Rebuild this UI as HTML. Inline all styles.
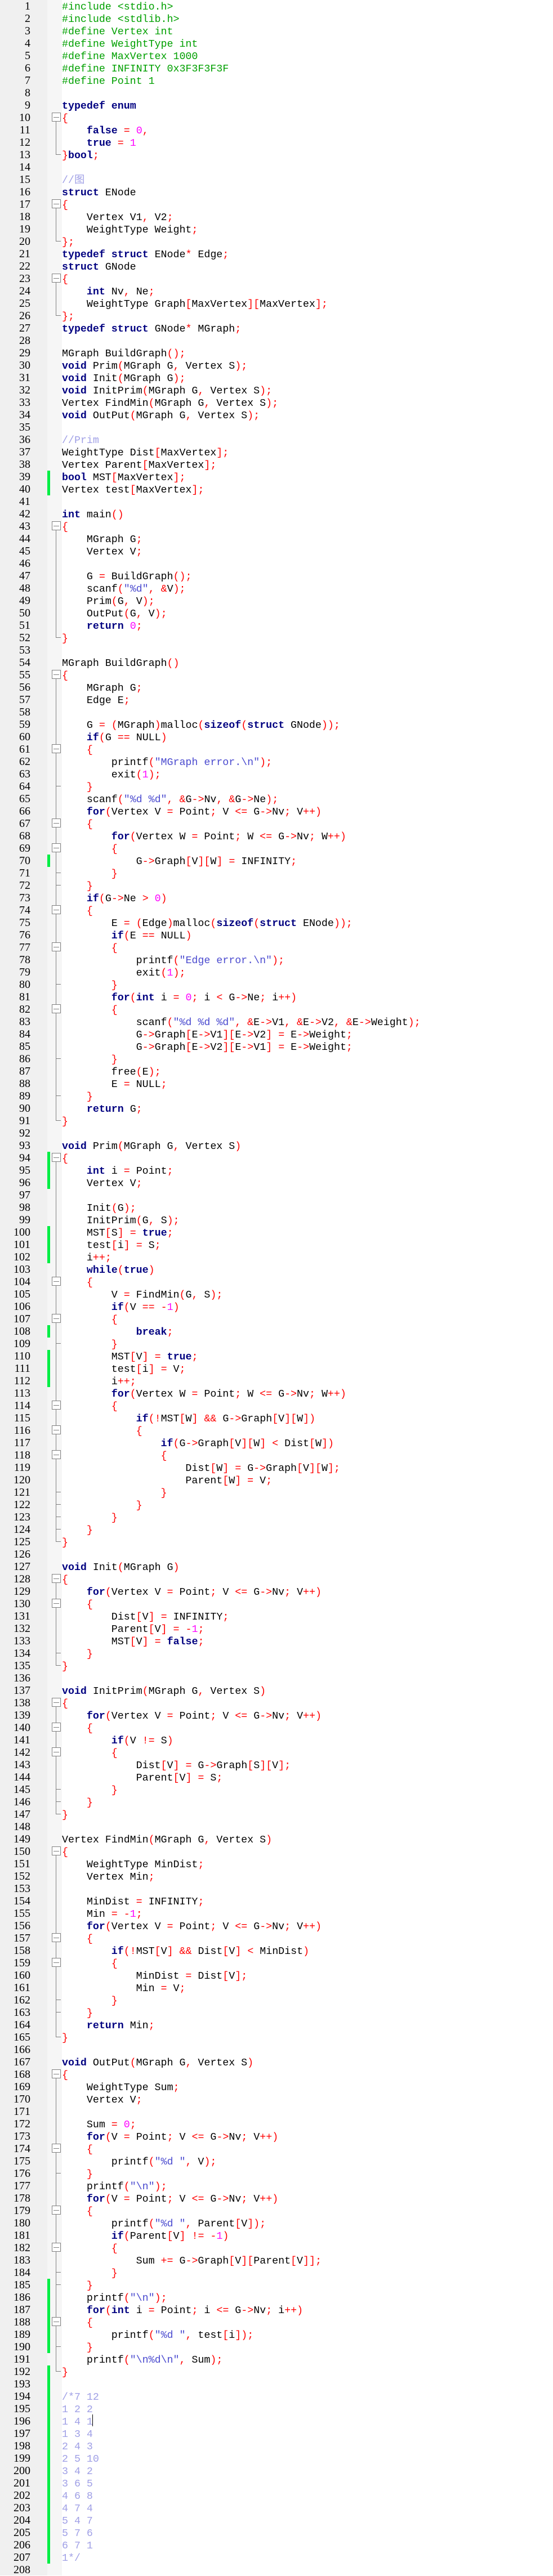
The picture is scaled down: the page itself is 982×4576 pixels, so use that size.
<!DOCTYPE html>
<html><head><meta charset="utf-8">
<style>
html,body{margin:0;padding:0;background:#fff;}
body{width:982px;height:4575px;position:relative;overflow:hidden;}
#gut{position:absolute;left:0;top:0;width:84px;height:4575px;background:#f0f0f0;}
#fold{position:absolute;left:84px;top:0;width:26px;height:4575px;background:#f6f6f6;}
.ln{position:absolute;left:0;width:54px;text-align:right;font-family:"Liberation Serif",serif;font-size:20px;line-height:22px;height:22px;color:#000;}
.code{position:absolute;left:110px;height:22px;line-height:22px;white-space:pre;font-family:"Liberation Mono","Noto Sans CJK SC",monospace;font-size:18.3px;color:#000;padding-top:2px;box-sizing:border-box;}
.g{position:absolute;left:84px;width:5px;height:22px;background:#00ee44;}
.box{position:absolute;left:92px;width:14px;height:14px;border:1px solid #808080;background:#fff;}
.box:after{content:"";position:absolute;left:2px;right:2px;top:7px;height:1px;background:#808080;}
.vl{position:absolute;left:99px;width:1px;background:#808080;}
.hl{position:absolute;left:99px;width:9px;height:1px;background:#808080;}
.k{color:#000080;font-weight:bold;}
.o{color:#ff0000;}
.n{color:#ff00ff;}
.s{color:#4a4acf;}
.p{color:#00a000;}
.c{color:#a0a0e6;}
#src{display:none;}
#cur{position:absolute;left:164px;top:4289px;width:1px;height:21px;background:#000;}
</style></head><body>
<div id="gut"></div><div id="fold"></div>
<pre id="src">#include &lt;stdio.h&gt;
#include &lt;stdlib.h&gt;
#define Vertex int
#define WeightType int
#define MaxVertex 1000
#define INFINITY 0x3F3F3F3F
#define Point 1

typedef enum
{
    false = 0,
    true = 1
}bool;

//图
struct ENode
{
    Vertex V1, V2;
    WeightType Weight;
};
typedef struct ENode* Edge;
struct GNode
{
    int Nv, Ne;
    WeightType Graph[MaxVertex][MaxVertex];
};
typedef struct GNode* MGraph;

MGraph BuildGraph();
void Prim(MGraph G, Vertex S);
void Init(MGraph G);
void InitPrim(MGraph G, Vertex S);
Vertex FindMin(MGraph G, Vertex S);
void OutPut(MGraph G, Vertex S);

//Prim
WeightType Dist[MaxVertex];
Vertex Parent[MaxVertex];
bool MST[MaxVertex];
Vertex test[MaxVertex];

int main()
{
    MGraph G;
    Vertex V;

    G = BuildGraph();
    scanf("%d", &amp;V);
    Prim(G, V);
    OutPut(G, V);
    return 0;
}

MGraph BuildGraph()
{
    MGraph G;
    Edge E;

    G = (MGraph)malloc(sizeof(struct GNode));
    if(G == NULL)
    {
        printf("MGraph error.\n");
        exit(1);
    }
    scanf("%d %d", &amp;G-&gt;Nv, &amp;G-&gt;Ne);
    for(Vertex V = Point; V &lt;= G-&gt;Nv; V++)
    {
        for(Vertex W = Point; W &lt;= G-&gt;Nv; W++)
        {
            G-&gt;Graph[V][W] = INFINITY;
        }
    }
    if(G-&gt;Ne &gt; 0)
    {
        E = (Edge)malloc(sizeof(struct ENode));
        if(E == NULL)
        {
            printf("Edge error.\n");
            exit(1);
        }
        for(int i = 0; i &lt; G-&gt;Ne; i++)
        {
            scanf("%d %d %d", &amp;E-&gt;V1, &amp;E-&gt;V2, &amp;E-&gt;Weight);
            G-&gt;Graph[E-&gt;V1][E-&gt;V2] = E-&gt;Weight;
            G-&gt;Graph[E-&gt;V2][E-&gt;V1] = E-&gt;Weight;
        }
        free(E);
        E = NULL;
    }
    return G;
}

void Prim(MGraph G, Vertex S)
{
    int i = Point;
    Vertex V;

    Init(G);
    InitPrim(G, S);
    MST[S] = true;
    test[i] = S;
    i++;
    while(true)
    {
        V = FindMin(G, S);
        if(V == -1)
        {
            break;
        }
        MST[V] = true;
        test[i] = V;
        i++;
        for(Vertex W = Point; W &lt;= G-&gt;Nv; W++)
        {
            if(!MST[W] &amp;&amp; G-&gt;Graph[V][W])
            {
                if(G-&gt;Graph[V][W] &lt; Dist[W])
                {
                    Dist[W] = G-&gt;Graph[V][W];
                    Parent[W] = V;
                }
            }
        }
    }
}

void Init(MGraph G)
{
    for(Vertex V = Point; V &lt;= G-&gt;Nv; V++)
    {
        Dist[V] = INFINITY;
        Parent[V] = -1;
        MST[V] = false;
    }
}

void InitPrim(MGraph G, Vertex S)
{
    for(Vertex V = Point; V &lt;= G-&gt;Nv; V++)
    {
        if(V != S)
        {
            Dist[V] = G-&gt;Graph[S][V];
            Parent[V] = S;
        }
    }
}

Vertex FindMin(MGraph G, Vertex S)
{
    WeightType MinDist;
    Vertex Min;

    MinDist = INFINITY;
    Min = -1;
    for(Vertex V = Point; V &lt;= G-&gt;Nv; V++)
    {
        if(!MST[V] &amp;&amp; Dist[V] &lt; MinDist)
        {
            MinDist = Dist[V];
            Min = V;
        }
    }
    return Min;
}

void OutPut(MGraph G, Vertex S)
{
    WeightType Sum;
    Vertex V;

    Sum = 0;
    for(V = Point; V &lt;= G-&gt;Nv; V++)
    {
        printf("%d ", V);
    }
    printf("\n");
    for(V = Point; V &lt;= G-&gt;Nv; V++)
    {
        printf("%d ", Parent[V]);
        if(Parent[V] != -1)
        {
            Sum += G-&gt;Graph[V][Parent[V]];
        }
    }
    printf("\n");
    for(int i = Point; i &lt;= G-&gt;Nv; i++)
    {
        printf("%d ", test[i]);
    }
    printf("\n%d\n", Sum);
}

/*7 12
1 2 2
1 4 1
1 3 4
2 4 3
2 5 10
3 4 2
3 6 5
4 6 8
4 7 4
5 4 7
5 7 6
6 7 1
1*/
</pre>
<div id="cur"></div>
<script>
(function(){
var src=document.getElementById('src');
var lines=src.textContent.split('\n');
while(lines.length<208)lines.push('');
lines=lines.slice(0,208);
src.parentNode.removeChild(src);
var KW={typedef:1,enum:1,struct:1,int:1,void:1,bool:1,true:1,false:1,return:1,if:1,for:1,while:1,break:1,sizeof:1};
var green={};
[[39,40],[70,70],[94,96],[100,102],[108,108],[110,112],[185,190],[192,207]].forEach(function(r){for(var i=r[0];i<=r[1];i++)green[i]=1;});
function esc(s){return s.replace(/&/g,'&amp;').replace(/</g,'&lt;').replace(/>/g,'&gt;');}
var out='';var inBlock=false;var depth=0;
for(var i=0;i<lines.length;i++){
 var L=lines[i];var top=i*22;var n=i+1;
 out+='<div class="ln" style="top:'+top+'px">'+n+'</div>';
 if(green[n])out+='<div class="g" style="top:'+top+'px"></div>';
 var h='';
 var t=L.trim();
 if(inBlock||t.indexOf('/*')==0){
  h='<span class="c">'+esc(L)+'</span>';
  inBlock=true; if(L.indexOf('*/')>=0)inBlock=false;
 } else if(t.charAt(0)=='#'){
  h='<span class="p">'+esc(L)+'</span>';
 } else {
  var re=/(\/\/.*$)|("(?:[^"\\]|\\.)*")|([A-Za-z_]\w*)|(\d+)|(\s+)|([\s\S])/g,m;
  while((m=re.exec(L))){
   if(m[1])h+='<span class="c">'+esc(m[1])+'</span>';
   else if(m[2])h+='<span class="s">'+esc(m[2])+'</span>';
   else if(m[3])h+=KW[m[3]]?'<span class="k">'+m[3]+'</span>':esc(m[3]);
   else if(m[4])h+='<span class="n">'+m[4]+'</span>';
   else if(m[5])h+=m[5];
   else h+='<span class="o">'+esc(m[6])+'</span>';
  }
 }
 out+='<div class="code" style="top:'+top+'px">'+h+'</div>';
 // folding
 if(t.charAt(0)=='{'){
  if(depth>0)out+='<div class="vl" style="top:'+top+'px;height:2px"></div>';
  out+='<div class="box" style="top:'+(top+2)+'px"></div>';
  out+='<div class="vl" style="top:'+(top+18)+'px;height:4px"></div>';
  depth++;
 } else if(t.charAt(0)=='}'&&depth>0){
  depth--;
  if(depth==0){
   out+='<div class="vl" style="top:'+top+'px;height:11px"></div>';
   out+='<div class="hl" style="top:'+(top+10)+'px"></div>';
  } else {
   out+='<div class="vl" style="top:'+top+'px;height:22px"></div>';
   out+='<div class="hl" style="top:'+(top+10)+'px"></div>';
  }
 } else if(depth>0){
  out+='<div class="vl" style="top:'+top+'px;height:22px"></div>';
 }
}
var d=document.createElement('div');d.innerHTML=out;document.body.appendChild(d);
})();
</script>
</body></html>
